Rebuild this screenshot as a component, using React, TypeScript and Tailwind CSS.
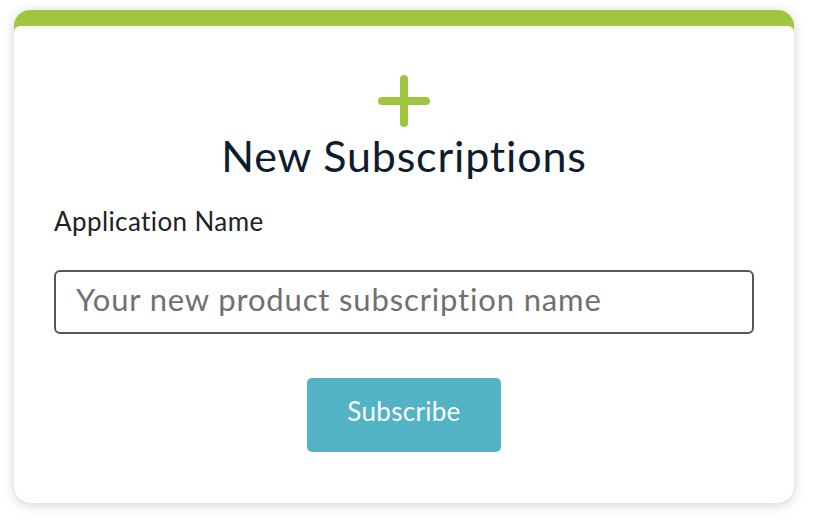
import React from "react";

export default function App() {
  const font = { fontFamily: "Lato, 'Noto Sans', sans-serif" };
  return (
    <div className="w-[814px] h-[520px] bg-white pt-[10px] px-[14px]" style={font}>
      <div className="w-[780px] h-[493px] rounded-[16px] bg-[#9ec73f] pt-[16px] overflow-hidden shadow-[0_2px_12px_rgba(0,0,0,0.18)]">
        <div className="h-full bg-white rounded-t-[6px] flex flex-col px-[40px]">
          <div className="flex justify-center pt-[49px]">
            <svg width="52" height="52" viewBox="0 0 52 52">
              <path d="M26 4 V48 M4 26 H48" stroke="#9ec73f" strokeWidth="8" strokeLinecap="round" fill="none" />
            </svg>
          </div>
          <h1 className="text-center text-[43px] leading-[48px] text-[#0e1c2f] mt-[5px] tracking-[0.85px]">New Subscriptions</h1>
          <label className="mt-[25px] text-[26px] leading-[32px] text-[#222] tracking-[0.4px]">Application Name</label>
          <div className="mt-[33px] h-[64px] border-2 border-[#555] rounded-[6px] flex items-center px-[20px] pb-[6px]">
            <span className="text-[31px] text-[#707070] tracking-[0.85px]">Your new product subscription name</span>
          </div>
          <div className="flex justify-center mt-[44px]">
            <button className="w-[194px] h-[74px] bg-[#52b2c6] rounded-[5px] text-white text-[26px] tracking-[0.3px] pb-[8px]">Subscribe</button>
          </div>
        </div>
      </div>
    </div>
  );
}
